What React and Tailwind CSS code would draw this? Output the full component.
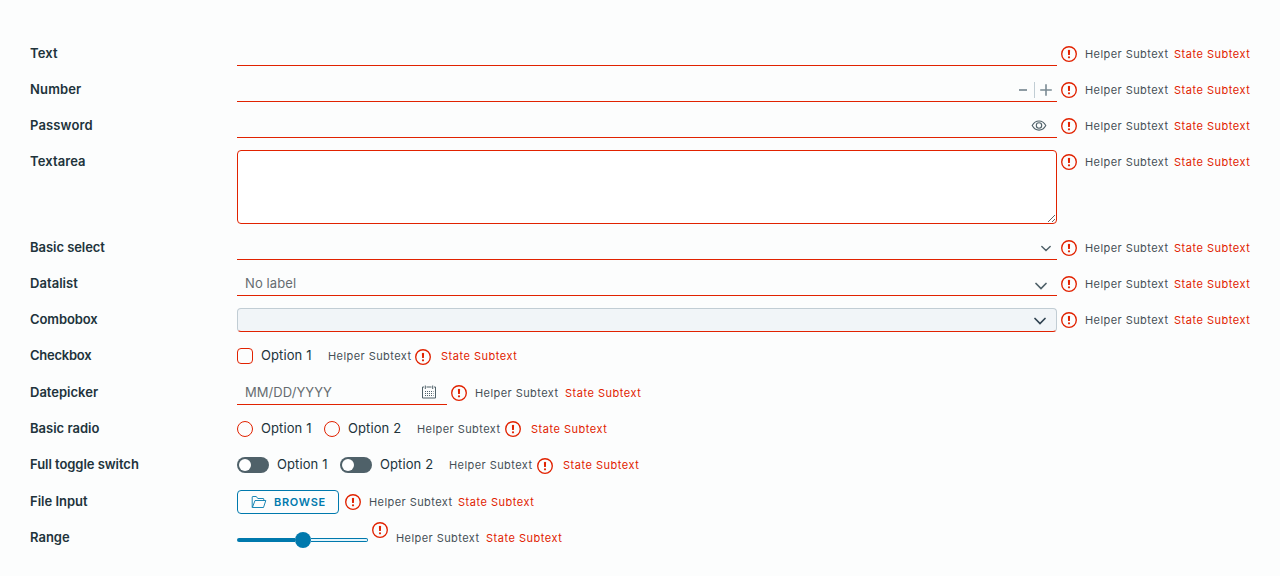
import React from "react";

const ErrorIcon = ({ className = "mt-1" }) => (
  <svg viewBox="0 0 16 16" className={`h-4 w-4 shrink-0 ${className}`} fill="none">
    <circle cx="8" cy="8" r="7.3" stroke="#e12200" strokeWidth="1.35" />
    <path d="M6.9 4.2Q8 3.4 9.1 4.2L8.9 9H7.1Z" fill="#e12200" />
    <circle cx="8" cy="11.3" r="1.1" fill="#e12200" />
  </svg>
);

const Helper = ({ className = "ml-2" }) => (
  <span className={`w-[83px] shrink-0 whitespace-nowrap text-[11px] leading-6 tracking-[0.43px] text-[#454f56] ${className}`}>Helper Subtext</span>
);

const State = ({ className = "ml-1.5" }) => (
  <span className={`w-[76px] shrink-0 whitespace-nowrap text-[11px] leading-6 tracking-[0.52px] text-[#e12200] ${className}`}>State Subtext</span>
);

const Feedback = () => (
  <>
    <ErrorIcon className="ml-1 mt-1" />
    <Helper />
    <State />
  </>
);

const Row = ({ label, tracking, className = "", children }) => (
  <div className={`flex shrink-0 items-start ${className}`}>
    <span className={`-mt-px w-[207px] shrink-0 text-[13px] font-semibold leading-6 text-[#21333b] ${tracking}`}>{label}</span>
    {children}
  </div>
);

const Line = ({ children, className = "" }) => (
  <div className={`flex h-6 w-[820px] items-center border-b border-[#e12200] ${className}`}>{children}</div>
);

const Chevron = ({ className }) => (
  <svg viewBox="0 0 12 8" className={`shrink-0 ${className}`} fill="none">
    <path d="M1 1.5L6 6.5L11 1.5" stroke="currentColor" strokeWidth="1.7" strokeLinecap="round" />
  </svg>
);

const Option = ({ n, className = "" }) => (
  <span className={`-mt-px shrink-0 whitespace-nowrap text-[13px] leading-6 text-[#21333b] ${className}`}>Option {n}</span>
);

const Radio = ({ className = "" }) => (
  <span className={`mt-1 h-4 w-4 shrink-0 rounded-full border border-[#e12200] ${className}`} />
);

const Toggle = ({ className = "" }) => (
  <span className={`mt-1 flex h-4 w-8 shrink-0 items-center rounded-full bg-[#4f6169] pl-0.5 ${className}`}>
    <span className="h-3 w-3 rounded-full bg-white" />
  </span>
);

export default function App() {
  return (
    <form className="flex h-[576px] w-[1280px] flex-col gap-3 overflow-hidden bg-[#fcfdfd] pl-[30px] pt-[42px] font-['Inter',sans-serif]">
      <Row label="Text" tracking="tracking-[0.15px]">
        <Line />
        <Feedback />
      </Row>
      <Row label="Number" tracking="tracking-[0.15px]">
        <Line className="justify-end">
          <svg viewBox="0 0 34 16" className="mr-1 mt-px h-4 w-[34px]" fill="none">
            <path d="M0 8H8" stroke="#7a8a93" strokeWidth="1.7" />
            <path d="M15.5 0V16" stroke="#c1cdd4" />
            <path d="M21.2 8H32.8M27 2.2V13.8" stroke="#7a8a93" strokeWidth="1.6" />
          </svg>
        </Line>
        <Feedback />
      </Row>
      <Row label="Password" tracking="tracking-[0.15px]">
        <Line className="justify-end">
          <svg viewBox="0 0 16 12" className="mr-2.5 h-3 w-4" fill="none" stroke="#4f6169">
            <path d="M1.2 5.5C4.4-.6 11.6-.6 14.8 5.5C11.6 11.6 4.4 11.6 1.2 5.5Z" strokeWidth="1.1" />
            <circle cx="8" cy="5.5" r="2.7" strokeWidth="1.1" />
          </svg>
        </Line>
        <Feedback />
      </Row>
      <Row label="Textarea" tracking="tracking-[0.1px]">
        <textarea className="block h-[74px] w-[820px] resize rounded border border-[#e12200] bg-white outline-none" />
        <Feedback />
      </Row>
      <Row label="Basic select" tracking="tracking-[-0.05px]">
        <Line className="justify-end text-[#4f6169]">
          <Chevron className="mr-1.5 mt-px h-[7px] w-2.5" />
        </Line>
        <Feedback />
      </Row>
      <Row label="Datalist" tracking="tracking-[0.05px]">
        <Line className="justify-between pl-2 pr-2.5 text-[#4f6169]">
          <span className="text-[13px] leading-[23px] tracking-[0.1px] text-[#666c70]">No label</span>
          <Chevron className="mt-1 h-2 w-3" />
        </Line>
        <Feedback />
      </Row>
      <Row label="Combobox" tracking="tracking-[-0.1px]">
        <div className="flex h-6 w-[820px] items-center justify-end rounded border border-[#c1cdd4] border-b-[#e12200] bg-[#f1f5f8] pr-2.5 text-[#314351]">
          <Chevron className="mt-0.5 h-2 w-3" />
        </div>
        <Feedback />
      </Row>
      <Row label="Checkbox" tracking="tracking-[-0.25px]" className="h-[25px]">
        <span className="mt-1 h-4 w-4 shrink-0 rounded border border-[#e12200]" />
        <Option n={1} className="ml-2 w-[51px] tracking-[0.1px]" />
        <Helper className="ml-4" />
        <ErrorIcon className="ml-1 mt-[5px]" />
        <State className="ml-2.5" />
      </Row>
      <Row label="Datepicker" tracking="tracking-[0px]">
        <div className="flex h-6 w-[210px] justify-between border-b border-[#e12200] pl-2 pr-2.5">
          <span className="text-[13px] leading-[22px] tracking-[0.05px] text-[#666c70]">MM/DD/YYYY</span>
          <svg viewBox="0 0 16 14" className="mt-1 h-3.5 w-4" fill="none" stroke="#4f6169">
            <path d="M3 2H1.5V13H14.5V2H13M5.5 2H10.5" />
            <path d="M4.3.5V4M11.7.5V4" />
            <path d="M4 6.5H12.5M4 8.5H12.5M4 10.5H12.5" strokeDasharray="1 1" />
          </svg>
        </div>
        <ErrorIcon className="ml-1 mt-1" />
        <Helper className="ml-2 mr-px" />
        <State />
      </Row>
      <Row label="Basic radio" tracking="tracking-[0px]">
        <Radio />
        <Option n={1} className="ml-2 w-[51px] tracking-[0.1px]" />
        <Radio className="ml-3" />
        <Option n={2} className="ml-2 mr-0.5 w-[51px] tracking-[0.1px]" />
        <Helper className="ml-4" />
        <ErrorIcon className="ml-[5px] mt-1" />
        <State className="ml-2.5" />
      </Row>
      <Row label="Full toggle switch" tracking="tracking-[-0.05px]" className="h-[25px]">
        <Toggle />
        <Option n={1} className="ml-2 w-[51px] tracking-[0.1px]" />
        <Toggle className="ml-3" />
        <Option n={2} className="ml-2 mr-0.5 w-[51px] tracking-[0.1px]" />
        <Helper className="ml-4" />
        <ErrorIcon className="ml-[5px] mt-[5px]" />
        <State className="ml-2.5" />
      </Row>
      <Row label="File Input" tracking="tracking-[0px]">
        <span className="mr-0.5 flex h-6 w-[102px] items-center rounded border border-[#0079ad] pl-[13px] text-[#0079ad]">
          <svg viewBox="0 0 16 14" className="mr-[7px] h-3.5 w-4" fill="none" stroke="currentColor">
            <path d="M1.2 12.5V2Q1.2 1.5 1.7 1.5H5.3L6.8 3.5H12.3Q12.8 3.5 12.8 4V5.5M1.4 12.5L4 5.5H14.8L12.5 12.5Z" strokeWidth="0.9" strokeLinejoin="round" />
          </svg>
          <span className="text-[11px] font-semibold leading-[22px] tracking-[0.7px]">BROWSE</span>
        </span>
        <Feedback />
      </Row>
      <Row label="Range" tracking="tracking-[0px]">
        <span className="mt-1.5 flex h-4 w-[131px] items-center">
          <span className="h-1 w-[58px] rounded-l-full bg-[#0079ad]" />
          <span className="h-4 w-4 rounded-full bg-[#0079ad]" />
          <span className="h-1 w-[57px] rounded-r-full border border-l-0 border-[#0079ad] bg-[#e3f5fc]" />
        </span>
        <ErrorIcon className="ml-1 -mt-1" />
        <Helper />
        <State className="ml-[7px]" />
      </Row>
    </form>
  );
}
